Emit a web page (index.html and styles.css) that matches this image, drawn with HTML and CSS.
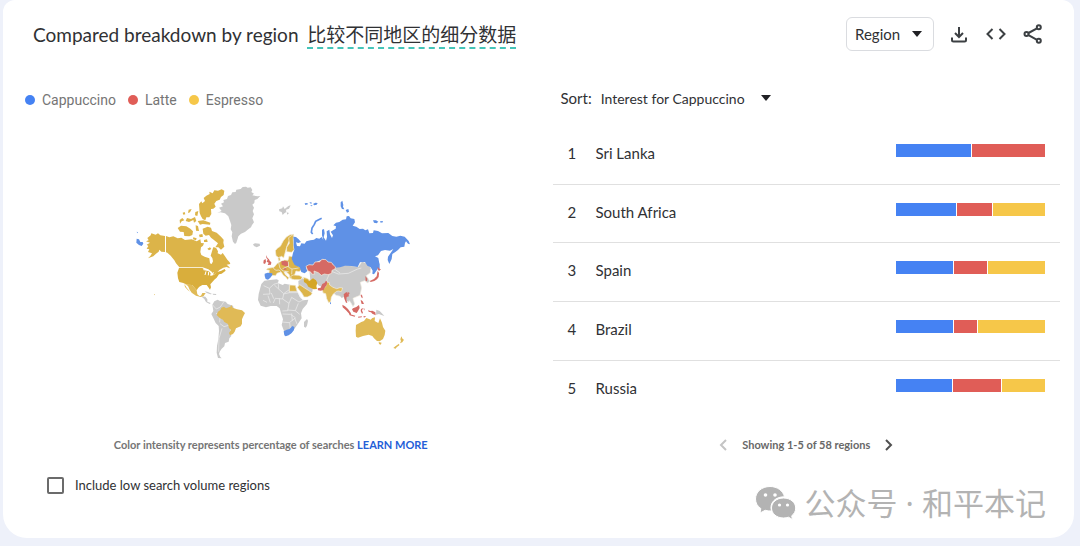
FILE: index.html
```html
<!DOCTYPE html>
<html lang="en">
<head>
<meta charset="utf-8">
<meta name="viewport" content="width=device-width, initial-scale=1">
<title>Compared breakdown by region</title>
<link rel="stylesheet" href="styles.css">
</head>
<body>
<main class="card">
  <header class="card-header">
    <h1 class="title">Compared breakdown by region <span class="translation" lang="zh">比较不同地区的细分数据</span></h1>
    <div class="actions">
      <div class="select-wrap">
        <select class="select region-select" aria-label="Resolution"><option>Region</option></select>
        <svg class="caret" viewBox="0 0 10 6" aria-hidden="true"><path d="M0 0h10L5 6z"/></svg>
      </div>
      <button class="icon-button" type="button" aria-label="Download">
        <svg viewBox="0 0 24 24"><path d="M12 5v10M8 11l4 4 4-4M5 15.500V18a1.500 1.500 0 0 0 1.500 1.500h11A1.500 1.500 0 0 0 19 18v-2.500"/></svg>
      </button>
      <button class="icon-button" type="button" aria-label="Embed">
        <svg viewBox="0 0 24 24"><path d="M8.500 7L3.500 12l5 5M15.500 7l5 5-5 5"/></svg>
      </button>
      <button class="icon-button" type="button" aria-label="Share">
        <svg viewBox="0 0 24 24"><path d="M7.500 11L16 6.300M7.500 13.200L16 17.800"/><circle cx="5.500" cy="12" r="2"/><circle cx="17.800" cy="5.200" r="2"/><circle cx="17.800" cy="18.800" r="2"/></svg>
      </button>
    </div>
  </header>

  <div class="columns">
    <section class="map-panel">
      <ul class="legend">
        <li><i class="dot blue"></i>Cappuccino</li>
        <li><i class="dot red"></i>Latte</li>
        <li><i class="dot yellow"></i>Espresso</li>
      </ul>
      <div class="map-area">
        <svg class="map" viewBox="-12 0 870 540" role="img" aria-label="Interest by region, world map">
          <g class="none">
            <path d="M262 98l13-5-8-10 12-4-6-8 9-4-2-7 11-3 3-9 9-3 4-8 10-1 2-7 13-2 6-6 10-1 5 3 9-1 5 8-3 6 8 5-5 5 16 3 8-1-9 9-8 3-1 9-6 5 5 9-4 10 4 10-5 12 5 12-6 8-3 7-10 7-8 7-12 5-8 8-3 10-3 9-4 4-6-7-4-16 2-12-5-9 2-13-4-12-5-14-10-9-14-3z"/>
            <path d="M369 193l6-3 14 1 1 6-10 5-8-4z"/>
            <path d="M447 88l10-3 2-6 5 8 11-9 7-2-5 10-9 3 1 7-6 4-5 5-3-9-7-2zM470 97l7 2-5 5z"/>
            <path d="M213 349l13 1 6 8 0 7 10 4-3 3-11-6-5-9zM224 334l10 2 12 6-5 1-12-5zM248 341l11 1-1 3-9-1z"/>
            <path d="M247 374l6-10 10-5 7 4 17 2 6 7 16 5 2 8-7 20-8 12 4 12 1 12 1 14 2 13-6 7-2 10-11 4-2 10-8 7-6 9-2 7 4 9 4 4-11-1-4-16 1-20 4-20 2-25-1-15-9-9-6-13-7-14 6-9z"/>
            <path d="M394 312l9-10 17-2 20-2 6 3-2 8 14 6 6-4 16 3 17 4 5 17 7 15 10 11 16-2-4 13-13 15-5 13 2 15-10 15-10 14-13 17-16 5-4-13-7-18 4-17-6-19-4-14-9-7-18 0-14 4-16-5-8-17 2-18z"/>
            <path d="M522 440l0-14 9-9 3 5-3 15-4 6z"/>
            <path d="M505 303l13-8 9 5 6 11 8 10 8 1-2 13-11 5-13 10-11-14-6-16zM538 268l22 4 11 7 8-7 15 6 21-4 3 20-9 9-6 17-14 8-24-12-9-14-15-2z"/>
            <path class="border" d="M590 300l12-27 13-13 32-5 38 5 11-15 14 4 13 15-2 14-12 9 10 16-6 6-9-7-13 5 4 17-5 22-21 9 5 17-5 8-6-11-5-7-8 0-5-10-27-6-14-13z"/>
            <path d="M739 389l10 4 8 8 6 7-11-4-5-2-9 2zM632 333l9 4 5 10 9 6 2 12-7-2-8-13-7 4-7-10z"/>
            <path class="line" d="M602 273l23 9 30-2 28-13 11-3M612 266l18 13M401 317l17 8 13-12 13-4M418 325l2 17-21 1M433 315l28 26 18-13M445 309l1 17M478 315v23l-17 4-3 15-22-2-6 14M478 338h27l9 18M458 357l19 13 8-18 22 14 14-7M424 339l7 17M414 347l7 21M399 361l12 6M448 355l1 18M477 370l-4 22-16 1M473 390l23 2 9-22M496 392l13 11M458 402l24 1 14 10M456 426l22 2 18-14M479 428l2 18M494 414l7 18M485 400l2 22"/>
            <path class="line" d="M247 374l12 13 12-6 10-15M258 399l12 12-1 16M270 431l12 9 17-5M276 445l-9 30-1 40"/>
          </g>
          <g class="yellow">
            <path d="M105 168L91 166 84 160 77 164 64 160 62 166 52 174 56 181 48 184 60 188 50 194 55 198 50 206 58 208 54 216 66 220 61 228 54 235 70 229 78 221 86 215 88 209 94 215 105 216z"/>
            <path d="M108 168L118 172 130 169 143 175 154 173 165 180 185 178 200 184 211 178 213 189 222 190 219 197 213 202 211 216 214 225 224 230 238 235 240 250 245 252 249 244 247 234 242 227 246 214 249 204 251 201 259 205 264 214 263 220 273 224 278 219 286 230 292 239 299 247 301 252 290 254 297 260 300 265 290 261 280 263 268 270 260 279 250 284 246 276 235 268 218 262 148 262 138 250 133 241 122 227 112 218 108 217z"/>
            <path d="M209 99l-2-27 7-8 3 6 8-7-4-9 8-7 10-5-1-7 10 5 5-9 11 1 11-4 8 4-2 13-8 6-4 8-10 4-6 8 4 9-7 6-7 1 1 15-6 10-9 0-3 9-8-4-5-8zM203 123l17-2 21 7-1 6-22-2-8 2zM218 146l15-6 10 3 3 10 14 5 13 12 8 9-1 9 3 12-10 9-8-7-9 0 8-12-15-12-6-5-6-8-10 2-7-6zM153 137l16 2 12 7 8 8-2 11-9 4-15-1-2-12-11-1-7-11zM171 114l12 3 12-6 4 12-7 5-2-8-13 6-10-3zM149 120l8-6 6 7-8 3-5 7zM176 89l9-2-5 10-6 2zM196 96l9-3-3 15-7-2zM197 136l7 2 3 15-9-1zM207 164l10-2 2 8-10 2zM222 180l9-2 2 8-11 0zM158 98l6-2 2 7-6 1zM190 172l10 3-2 6-9-3zM232 206l8-4 4 5-7 4z"/>
            <path class="us" d="M147 264L217 264 224 269 236 273 242 280 241 288 251 285 262 276 274 272 284 267 287 272 275 281 267 283 260 293 253 299 247 306 241 313 243 322 240 329 235 322 230 315 217 315 208 320 204 325 200 331 186 315 172 314 160 309 148 306 144 295 142 278z"/>
            <path class="mx" d="M160 309L172 314 186 315 200 331 202 343 208 348 213 347 217 339 227 339 221 348 212 351 198 347 185 338 179 329 174 318 165 312zM163 312L170 323 180 335 174 331 165 321z"/>
            <path class="br" d="M260 405l4-10 7-5 3-7 8-3 6 5 13-5 3-5 4 8 13 5 15 3 9 8-5 10-4 9 0 13-4 8-14 6-4 10-5 7-9 4-3-7 6-9-6-6-3-12-11-6-4-7-10-5z"/>
            <path class="border" d="M436 212l6-7 9-6 9-17 9-11 11-7 10-1 2 7-9 6-7 10-6 15-4 15-5 18-6-5-9 4-8-6z"/>
            <path class="border" d="M476 173l14-10 0 17 1 17 1 12-7 8-15-2 0-13 8-12z"/>
            <path class="border" d="M444 234l5-3 2 10-5 3zM413 265l19-3 10-12 13-7 9-3 10 1 3-13 12 2 1 13 8 10 13 9 3 8-7 5-9-2-4 11 4 6-9 7-10-3-1-10-9-8-7 0 5 9 10 8-4 6-5-7-8-6-7-10-12 4-4 7-13-1-8-2 2-13-9-2z"/>
            <path class="border" d="M482 289l8-4 17 1 10 5-4 8-19 0-10-2zM520 292l11 3 8 5-8 3-10-5z"/>
            <path class="border" d="M479 315l17 1 5 18h-23zM502 322l7-8 15 10 11 7 12 8-4 7-11 5-10 0-6-11-9-11z"/>
            <path class="iran" d="M521 297l10 2 8 3 10-7 9 6 4 8-3 9 2 9-10 1-10-5-6-3-5-9-8-5z"/>
            <path class="india border" d="M577 329l10-9 3-13 8 0 1 8 10 7 11 4 10-3 8 1-4 11-8-2-6 1-10 8-6 10-2 13-6 3-6-12-3-15-8-2z"/>
            <path class="au" d="M678 435l16-9 8-3 7-9 10 4 3 1 5-5 8-2-1 11 11 6 5-14 6 13 3 13 7 11-2 13-5 12-10 7-8-1-9-8-5-7-11-4-17 4-15 5-6-3-1-18zM746 486l9 2-3 6-5-2zM814 469l4 8 4 2-5 8-7 3 3-7-2-5zM796 499l11-8 1 5-8 6-3 4-7-2z"/>
            <path d="M72 342l3 1-1 3z"/>
          </g>
          <g class="blue">
            <path d="M20 155l4 2-2 3zM20 176l7 2 4 8 7 0 2 5-5 7-8-3-8-7z"/>
            <path d="M490 170L498 171 506 178 513 186 505 189 498 187 501 198 510 199 514 190 524 191 529 184 541 181 552 179 559 174 568 176 575 171 580 180 576 166 576 149 582 147 584 160 581 172 588 182 591 171 590 154 598 149 600 163 606 174 609 166 602 155 609 151 617 146 618 139 610 136 618 128 628 126 638 119 648 118 650 109 657 108 662 115 673 117 675 127 668 137 679 140 689 147 699 146 706 151 714 148 718 160 729 159 731 151 744 153 756 160 775 159 787 168 799 170 811 167 824 170 836 183 840 193 834 191 828 184 825 189 823 200 812 202 804 210 796 216 787 222 785 237 778 252 773 240 774 230 784 216 790 207 780 212 765 210 753 213 744 226 735 229 745 234 748 250 743 267 732 283 727 281 728 272 722 262 712 257 705 246 690 247 683 261 665 258 645 257 630 262 616 263 606 250 592 245 580 238 566 243 558 247 557 257 530 258 529 265 532 273 524 280 514 276 509 262 494 255 489 246 485 236 489 219 493 209 491 196 491 181z"/>
            <path class="stroke" d="M548 162l-4-5 2-13 7-11 4-9 9-5 9-4"/>
            <path d="M524 70l8-1 2 4-8 2zM538 66l8 2-3 4zM549 72l7-4 7 1-3 5-7 2zM540 77l7-2-1 4zM632 67l5-5 3 13-1 5 4 8-7-1-4-8zM647 90l8-3 2 8-6 3zM729 121l9 0 7 4-5 5-8-2zM750 124l8-1 1 4-7 1zM744 248l5 3 0 17-5-3z"/>
            <path d="M404 281l9-3 14 2 0 5-6 8-7 6-7-2-3-9z"/>
            <path d="M463 466l-2-12 9-5 9-2 8-9 6 3-1 9-7 9-9 7-9 3z"/>
            <path d="M600 366l3 2 0 5-3-2z"/>
          </g>
          <g class="red">
            <path d="M409 225l3 8 5 5 2 4 5 5-1 7-10 1 3-7-6-3 3-7-4-4zM401 241l6-4 1 8-3 7-5-2z"/>
            <path d="M454 244l11-2 9 3 1 12-8 2-12-5zM459 264l8 1 4 3-9 2z"/>
            <path class="border" d="M528 259l9-5 12 1 6-9 14-1 7-7 12 1 6 7 10 1 6 8 7 6-3 7-8 3-1 9-11 4-11-2-9 4-9-8-13-5 1 10-8-1-3-6-9-4z"/>
            <path d="M563 325l9-2 5-11 7-4 4-6 4 4-2 9-6 8-3 7-9 2-8-1z"/>
            <path d="M743 272l4 7-1 12-5 7-8 5-11 3-3-3 13-6 8-8zM743 260l5 6 5 2-6 5-4-5zM706 288l6 8-1 8-4-2z"/>
            <path d="M641 343l8-7 6 6 2 7-7 2-1 8 3 9-4 0-5-12zM652 335l7 4-3 5zM637 374l8 5 9 8 8 11 2 6-5-1-11-12-10-9zM657 401l9 3 10 3-2 3-15-4zM669 385l10-4 8-6 2 9-5 9-4 6-10-4-4-7zM693 387l7-3-4 7 3 8-3 2-4-8zM692 359l6 5 4 8-7 0-2-7zM693 343l4 4 1 8-3-2-3-6zM701 384l3 3-2 5zM714 391l8 2 5-1 9 5 1 9-10-5-4-4-7-2zM684 410l12-1-1 3-10 1zM700 409l9-1-7 5z"/>
          </g>
          <path class="lake" d="M220 269l14 2M228 274l-3 11M236 275l-1 11M242 283l10-5"/>
          <path class="line border-line" d="M430 265l8 6 9-1 7 6M446 248l4 17 9 8 17 2M475 245l1 17 10 5 20-3M476 258l-18 8M466 273l4 14M486 267l-1 16"/>
        </svg>
      </div>
      <p class="map-note">Color intensity represents percentage of searches <a href="#">LEARN MORE</a></p>
      <label class="low-volume"><input type="checkbox">Include low search volume regions</label>
    </section>

    <section class="list-panel">
      <div class="sort">
        <label for="sort">Sort:</label>
        <div class="select-wrap">
          <select class="select sort-select" id="sort"><option>Interest for Cappuccino</option></select>
          <svg class="caret" viewBox="0 0 10 6" aria-hidden="true"><path d="M0 0h10L5 6z"/></svg>
        </div>
      </div>
      <table class="regions">
        <tbody>
          <tr><td class="rank">1</td><td>Sri Lanka</td><td class="share"><div class="bar"><i class="blue" style="flex-grow:75"></i><i class="red" style="flex-grow:73"></i></div></td></tr>
          <tr><td class="rank">2</td><td>South Africa</td><td class="share"><div class="bar"><i class="blue" style="flex-grow:60"></i><i class="red" style="flex-grow:35"></i><i class="yellow" style="flex-grow:52"></i></div></td></tr>
          <tr><td class="rank">3</td><td>Spain</td><td class="share"><div class="bar"><i class="blue" style="flex-grow:57"></i><i class="red" style="flex-grow:33"></i><i class="yellow" style="flex-grow:57"></i></div></td></tr>
          <tr><td class="rank">4</td><td>Brazil</td><td class="share"><div class="bar"><i class="blue" style="flex-grow:57"></i><i class="red" style="flex-grow:23"></i><i class="yellow" style="flex-grow:67"></i></div></td></tr>
          <tr><td class="rank">5</td><td>Russia</td><td class="share"><div class="bar"><i class="blue" style="flex-grow:56"></i><i class="red" style="flex-grow:48"></i><i class="yellow" style="flex-grow:43"></i></div></td></tr>
        </tbody>
      </table>
      <nav class="pager" aria-label="Pages">
        <button type="button" aria-label="Previous" disabled><svg viewBox="0 0 8 12"><path d="M7 1L2 6l5 5"/></svg></button>
        <span>Showing 1-5 of 58 regions</span>
        <button type="button" aria-label="Next"><svg viewBox="0 0 8 12"><path d="M1 1l5 5-5 5"/></svg></button>
      </nav>
    </section>
  </div>

  <div class="watermark" lang="zh">
    <svg viewBox="0 0 41 34" aria-hidden="true">
      <path class="bubble" d="M15 0.500C6.700 0.500 0.500 6 0.500 13c0 4 2 7.300 5.300 9.500L5 27l5.200-2.700c2 .6 4 .8 6.300.7-2.500-8 4-14.500 13-14.200C28 4.500 22 .5 15 .5z"/>
      <path class="bubble" d="M28.500 12C21.500 12 16.500 16.500 16.500 22s5 10 12 10c1.800 0 3.500-.3 5-.8l4 2.300-.8-3.700c2.500-1.900 4-4.600 4-7.800 0-5.500-5.200-10-12.200-10z"/>
      <circle cx="10.500" cy="9" r="1.800"/><circle cx="20" cy="9" r="1.800"/><circle cx="24.500" cy="19" r="1.600"/><circle cx="32.500" cy="19" r="1.600"/>
    </svg>
    <span>公众号 · 和平本记</span>
  </div>
</main>
</body>
</html>
```
FILE: styles.css
```css
* { box-sizing: border-box; }
body {
  margin: 0;
  background: #eef1fa;
  color: #303134;
  font-family: Lato, "Noto Sans CJK SC", sans-serif;
  font-size: 15px;
}
button, select { font: inherit; color: inherit; }
.card {
  position: relative;
  margin: 0 6px 8px 3px;
  padding-bottom: 44px;
  background: #fff;
  border-radius: 12px 12px 24px 24px;
}
.card-header {
  display: flex;
  align-items: center;
  justify-content: space-between;
  padding: 17px 29px 0 30px;
}
.title { margin: 0; font-size: 19px; font-weight: 400; line-height: 24px; }
.translation {
  margin-left: 4px;
  font-family: "Noto Sans CJK SC", sans-serif;
  border-bottom: 2px dashed #45c4b8;
}
.actions { display: flex; align-items: center; gap: 13px; }
.select-wrap { position: relative; }
.select { display: block; appearance: none; border: 0; background: none; cursor: pointer; }
.region-select {
  width: 88px;
  height: 34px;
  padding: 0 8px;
  border: 1px solid #dadce0;
  border-radius: 6px;
}
.caret { position: absolute; right: 12px; top: 50%; width: 10px; height: 6px; margin-top: -3px; fill: #202124; pointer-events: none; }
.icon-button { width: 24px; height: 24px; padding: 0; border: 0; background: none; }
.icon-button svg { display: block; fill: none; stroke: #3c4043; stroke-width: 2; }

.columns { display: grid; grid-template-columns: 1fr 1fr; gap: 20px; padding: 35px 14px 0 22px; }
.legend {
  display: flex;
  gap: 12px;
  margin: 0;
  padding: 4px 0 0;
  list-style: none;
  font-family: Roboto, sans-serif;
  font-size: 14px;
  line-height: 20px;
  color: #757575;
}
.legend li { display: flex; align-items: center; gap: 7px; }
.dot { width: 10px; height: 10px; border-radius: 50%; }
.dot.blue, .bar .blue { background: #4582f3; }
.dot.red, .bar .red { background: #e05d57; }
.dot.yellow, .bar .yellow { background: #f6c749; }

.map-area { padding: 70px 16px 77px 0; text-align: center; }
.map { display: block; width: 290px; margin: 0 auto; }
.map .none { fill: #c9c9c9; }
.map .yellow { fill: #dcb449; }
.map .blue { fill: #5f91e6; }
.map .red { fill: #d56a64; }
.map .us { fill: #d9ae3c; }
.map .mx, .map .br, .map .au, .map .india { fill: #e0ba56; }
.map .iran { fill: #d5a627; }
.map .border { stroke: #f3eee2; stroke-width: 2; }
.map .line, .map .lake { fill: none; stroke: #efefef; stroke-width: 2; }
.map .lake { stroke: #fff; stroke-width: 3; }
.map .stroke { fill: none; stroke: #5f91e6; stroke-width: 5; }
.map-note { margin: 0; padding-right: 16px; text-align: center; font-size: 11px; font-weight: 700; line-height: 16px; color: #757575; }
.map-note a { color: #2460d8; text-decoration: none; }
.low-volume { display: flex; align-items: center; gap: 11px; margin: 23px 0 0 22px; font-size: 13px; line-height: 18px; }
.low-volume input { appearance: none; width: 17px; height: 17px; margin: 0; border: 2px solid #6b6b6b; border-radius: 2px; }

.sort { display: flex; align-items: center; gap: 9px; padding-left: 8px; height: 24px; }
.sort-select { width: 181px; height: 24px; padding: 0; font-size: 14px; }
.sort .caret { right: 11px; }
.regions { width: 100%; height: 292px; margin-top: 16px; border-spacing: 0; line-height: 20px; }
.regions td { padding: 17px 0 0; vertical-align: top; border-bottom: 1px solid #e0e0e0; }
.regions tr:last-child td { border-bottom: 0; }
.regions .rank { width: 43px; padding-left: 15px; }
.regions .share { width: 164px; padding: 18px 15px 0 0; }
.bar { display: flex; gap: 1px; height: 13px; }
.bar i { flex-basis: 0; }
.pager { display: flex; align-items: center; justify-content: center; gap: 15px; margin-top: 18px; font-size: 11px; font-weight: 700; line-height: 18px; color: #686868; }
.pager button { width: 8px; height: 12px; padding: 0; border: 0; background: none; }
.pager svg { display: block; fill: none; stroke: #505050; stroke-width: 2; }
.pager button:disabled svg { stroke: #c4c4c4; }

.watermark { position: absolute; right: 28px; bottom: 16px; display: flex; align-items: center; gap: 9px; font-family: "Noto Sans", "Noto Sans CJK SC", sans-serif; font-size: 31px; line-height: 38px; color: #b3b3b3; }
.watermark svg { width: 41px; height: 34px; fill: #fff; }
.watermark .bubble { fill: #b3b3b3; stroke: #fff; stroke-width: 1; }
```
